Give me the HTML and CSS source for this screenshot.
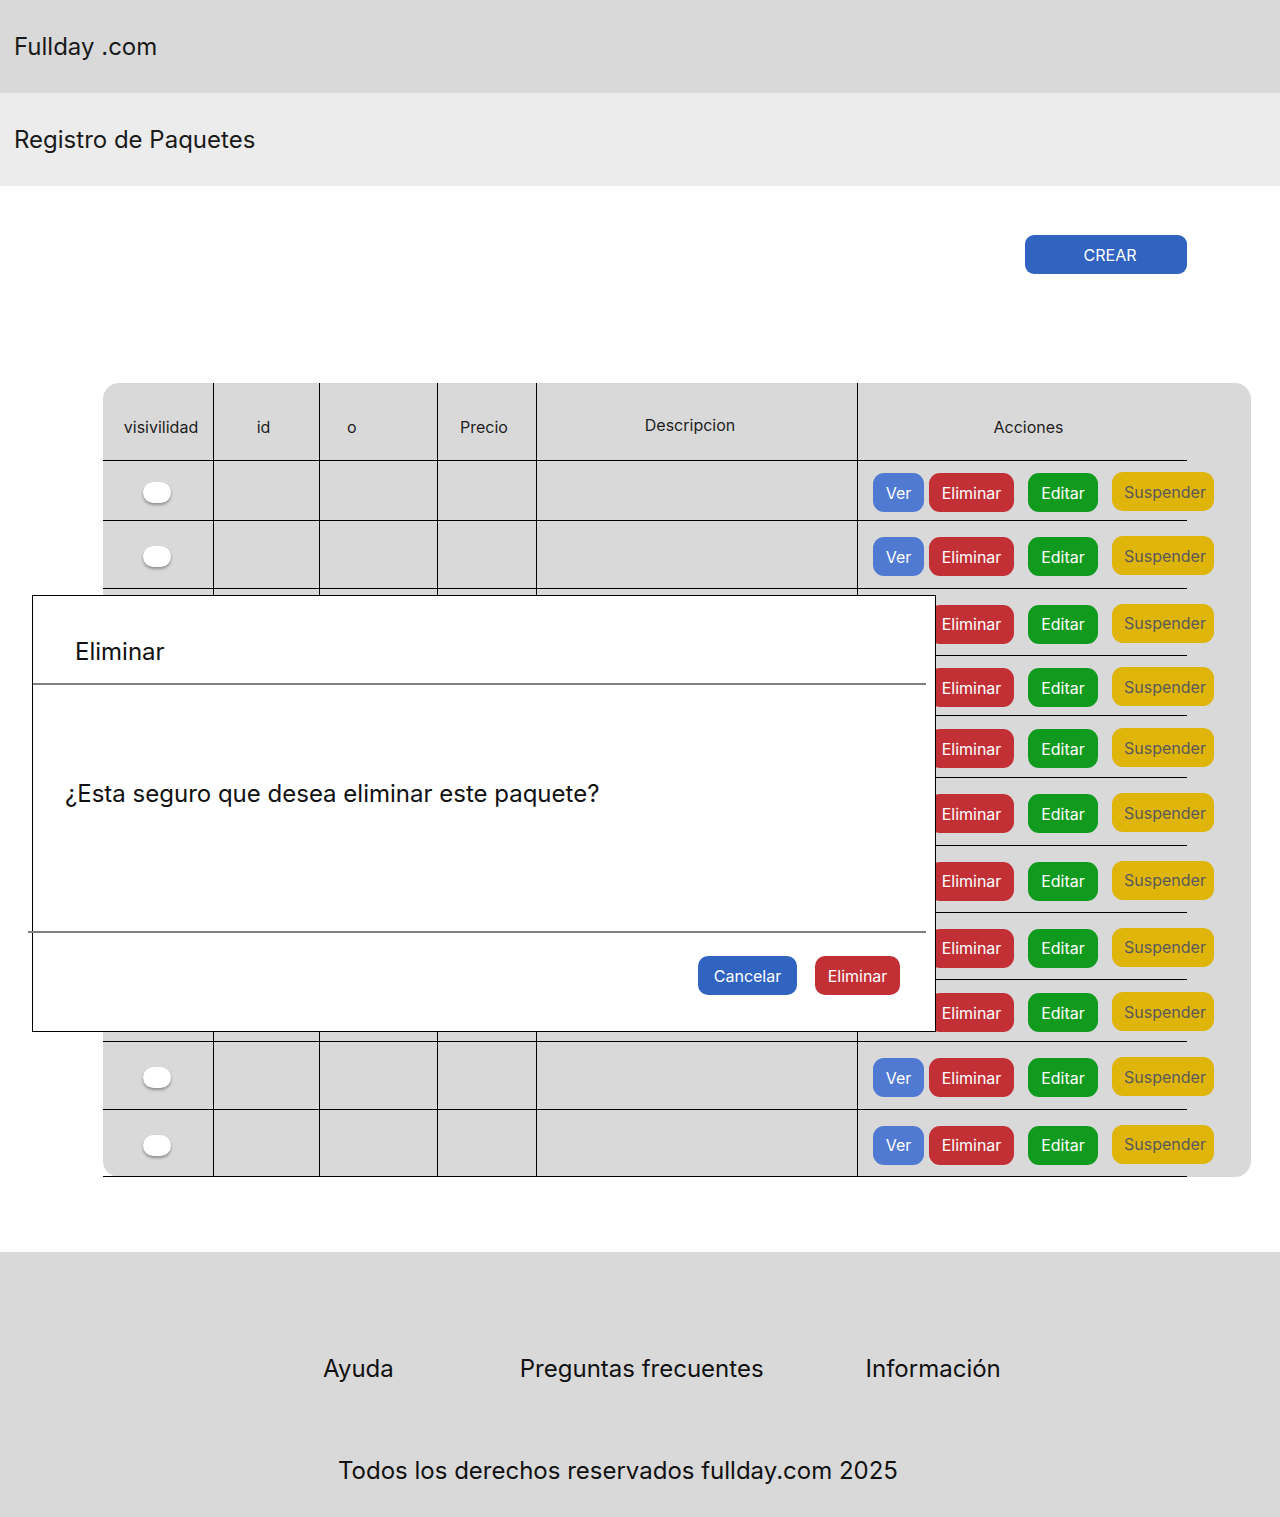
FILE: index.html
```html
<!DOCTYPE html>
<html lang="es">
<head>
<meta charset="utf-8">
<title>Registro de Paquetes</title>
<link rel="stylesheet" href="styles.css">
</head>
<body>
<header class="topbar"><span>Fullday .com</span></header>
<div class="subbar"><span>Registro de Paquetes</span></div>
<main class="main">
  <div class="toolbar"><button class="btn-crear">CREAR</button></div>
  <section class="table-card">
    <div class="trow thead">
      <div class="cell cell-vis">visivilidad</div>
      <div class="cell cell-id">id</div>
      <div class="cell cell-left">o</div>
      <div class="cell cell-price">Precio</div>
      <div class="cell cell-desc">Descripcion</div>
      <div class="cell cell-act">Acciones</div>
    </div>
    <div class="trow h60"><div class="cell"><span class="toggle"></span></div><div class="cell"></div><div class="cell"></div><div class="cell"></div><div class="cell"></div><div class="cell actions"><span class="b b-ver">Ver</span><span class="b b-del">Eliminar</span><span class="b b-edit">Editar</span><span class="b b-sus">Suspender</span></div></div>
    <div class="trow h68"><div class="cell"><span class="toggle"></span></div><div class="cell"></div><div class="cell"></div><div class="cell"></div><div class="cell"></div><div class="cell actions"><span class="b b-ver">Ver</span><span class="b b-del">Eliminar</span><span class="b b-edit">Editar</span><span class="b b-sus">Suspender</span></div></div>
    <div class="trow h67"><div class="cell"><span class="toggle"></span></div><div class="cell"></div><div class="cell"></div><div class="cell"></div><div class="cell"></div><div class="cell actions"><span class="b b-ver">Ver</span><span class="b b-del">Eliminar</span><span class="b b-edit">Editar</span><span class="b b-sus">Suspender</span></div></div>
    <div class="trow h60"><div class="cell"><span class="toggle"></span></div><div class="cell"></div><div class="cell"></div><div class="cell"></div><div class="cell"></div><div class="cell actions"><span class="b b-ver">Ver</span><span class="b b-del">Eliminar</span><span class="b b-edit">Editar</span><span class="b b-sus">Suspender</span></div></div>
    <div class="trow h62"><div class="cell"><span class="toggle"></span></div><div class="cell"></div><div class="cell"></div><div class="cell"></div><div class="cell"></div><div class="cell actions"><span class="b b-ver">Ver</span><span class="b b-del">Eliminar</span><span class="b b-edit">Editar</span><span class="b b-sus">Suspender</span></div></div>
    <div class="trow h68"><div class="cell"><span class="toggle"></span></div><div class="cell"></div><div class="cell"></div><div class="cell"></div><div class="cell"></div><div class="cell actions"><span class="b b-ver">Ver</span><span class="b b-del">Eliminar</span><span class="b b-edit">Editar</span><span class="b b-sus">Suspender</span></div></div>
    <div class="trow h67"><div class="cell"><span class="toggle"></span></div><div class="cell"></div><div class="cell"></div><div class="cell"></div><div class="cell"></div><div class="cell actions"><span class="b b-ver">Ver</span><span class="b b-del">Eliminar</span><span class="b b-edit">Editar</span><span class="b b-sus">Suspender</span></div></div>
    <div class="trow h67"><div class="cell"><span class="toggle"></span></div><div class="cell"></div><div class="cell"></div><div class="cell"></div><div class="cell"></div><div class="cell actions"><span class="b b-ver">Ver</span><span class="b b-del">Eliminar</span><span class="b b-edit">Editar</span><span class="b b-sus">Suspender</span></div></div>
    <div class="trow h62"><div class="cell"><span class="toggle"></span></div><div class="cell"></div><div class="cell"></div><div class="cell"></div><div class="cell"></div><div class="cell actions"><span class="b b-ver">Ver</span><span class="b b-del">Eliminar</span><span class="b b-edit">Editar</span><span class="b b-sus">Suspender</span></div></div>
    <div class="trow h68"><div class="cell"><span class="toggle"></span></div><div class="cell"></div><div class="cell"></div><div class="cell"></div><div class="cell"></div><div class="cell actions"><span class="b b-ver">Ver</span><span class="b b-del">Eliminar</span><span class="b b-edit">Editar</span><span class="b b-sus">Suspender</span></div></div>
    <div class="trow h67"><div class="cell"><span class="toggle"></span></div><div class="cell"></div><div class="cell"></div><div class="cell"></div><div class="cell"></div><div class="cell actions"><span class="b b-ver">Ver</span><span class="b b-del">Eliminar</span><span class="b b-edit">Editar</span><span class="b b-sus">Suspender</span></div></div>
  </section>
</main>
<div class="modal" role="dialog">
  <div class="modal-head">Eliminar</div>
  <div class="modal-line"></div>
  <div class="modal-body">¿Esta seguro que desea eliminar este paquete?</div>
  <div class="modal-line modal-line-wide"></div>
  <div class="modal-foot">
    <button class="mb mb-cancel">Cancelar</button>
    <button class="mb mb-del">Eliminar</button>
  </div>
</div>
<footer class="footer">
  <nav class="links">
    <span class="link l1">Ayuda</span>
    <span class="link l2">Preguntas frecuentes</span>
    <span class="link l3">Información</span>
  </nav>
  <p class="copy">Todos los derechos reservados fullday.com 2025</p>
</footer>
</body>
</html>
```
FILE: styles.css
```css
* { box-sizing: border-box; }
html, body { margin: 0; padding: 0; }
body {
  position: relative;
  width: 1280px;
  min-height: 1517px;
  background: #ffffff;
  font-family: Inter, "Noto Sans", sans-serif;
  color: #1a1a1a;
}
.topbar {
  height: 93px;
  background: #d9d9d9;
  display: flex;
  align-items: center;
  padding-left: 14px;
  font-size: 24px;
}
.subbar {
  height: 93px;
  background: #ececec;
  display: flex;
  align-items: center;
  padding-left: 14px;
  font-size: 24px;
}
.main {
  padding-top: 49px;
  padding-bottom: 75px;
}
.toolbar {
  display: flex;
  justify-content: flex-end;
  padding-right: 93px;
}
.btn-crear {
  width: 162px;
  height: 39px;
  border: 0;
  border-radius: 9px;
  background: #3064c0;
  color: #ffffff;
  font-family: Inter, sans-serif;
  font-size: 16px;
  padding: 0 0 0 8px;
}
.table-card {
  margin: 109px 29px 0 103px;
  background: #d9d9d9;
  border-radius: 16px;
  padding-right: 64px;
}
.trow {
  display: grid;
  grid-template-columns: 111px 106px 118px 99px 321px 329px;
  border-bottom: 1px solid #000;
}
.thead { height: 78px; }
.h60 { height: 60px; }
.h62 { height: 62px; }
.h67 { height: 67px; }
.h68 { height: 68px; }
.cell {
  border-right: 1px solid #000;
  display: flex;
  align-items: center;
  justify-content: center;
  font-size: 16px;
  padding-top: 4px;
}
.thead .cell { padding-top: 11px; color: #1e1e1e; }
.thead .cell-vis { padding-left: 6px; }
.thead .cell-id { padding-right: 6px; }
.thead .cell-price { padding-right: 6px; }
.thead .cell-desc { padding-top: 6px; padding-right: 14px; }
.thead .cell-act { padding-left: 12px; }
.cell-left { justify-content: flex-start; padding-left: 27px; }
.cell-act, .actions { border-right: 0; }
.actions {
  justify-content: flex-start;
  padding-left: 15px;
  overflow: visible;
  white-space: nowrap;
}
.toggle {
  display: block;
  width: 28px;
  height: 21px;
  border-radius: 11px;
  background: #ffffff;
  box-shadow: 0 2px 3px rgba(0, 0, 0, 0.35);
  margin-left: -2px;
}
.b {
  display: inline-flex;
  align-items: center;
  justify-content: center;
  height: 39px;
  border-radius: 11px;
  font-size: 16px;
  color: #ffffff;
  flex: none;
}
.b-ver { width: 51px; background: #5079d2; }
.b-del { width: 85px; background: #c23036; margin-left: 5px; }
.b-edit { width: 70px; background: #119b1e; margin-left: 14px; }
.b-sus { width: 102px; background: #e0b50a; color: #5a5a5a; margin-left: 14px; padding-left: 4px; position: relative; top: -1px; }

.modal {
  position: absolute;
  left: 32px;
  top: 595px;
  width: 904px;
  height: 437px;
  background: #ffffff;
  border: 1px solid #000;
  display: flex;
  flex-direction: column;
}
.modal-head {
  height: 87px;
  flex: none;
  display: flex;
  align-items: center;
  padding: 24px 0 0 42px;
  font-size: 24px;
  color: #111;
}
.modal-line {
  height: 2px;
  flex: none;
  background: #808080;
  margin-right: 9px;
}
.modal-line-wide { margin-left: -5px; }
.modal-body {
  height: 246px;
  flex: none;
  padding: 94px 0 0 32px;
  font-size: 24px;
  line-height: 30px;
  color: #111;
}
.modal-foot {
  flex: 1;
  display: flex;
  justify-content: flex-end;
  align-items: flex-start;
  padding: 23px 35px 0 0;
  gap: 18px;
}
.mb {
  height: 39px;
  border: 0;
  border-radius: 10px;
  color: #ffffff;
  font-family: Inter, sans-serif;
  font-size: 16px;
  padding: 0;
}
.mb-cancel { width: 99px; background: #3064c0; }
.mb-del { width: 85px; background: #c23036; }

.footer {
  height: 265px;
  background: #d9d9d9;
  padding-top: 102px;
  font-size: 24px;
  color: #111;
}
.links {
  display: flex;
  padding-left: 323px;
  line-height: 30px;
}
.l2 { margin-left: 126px; }
.l3 { margin-left: 102px; }
.copy {
  margin: 72px 0 0 338px;
  line-height: 30px;
}
```
